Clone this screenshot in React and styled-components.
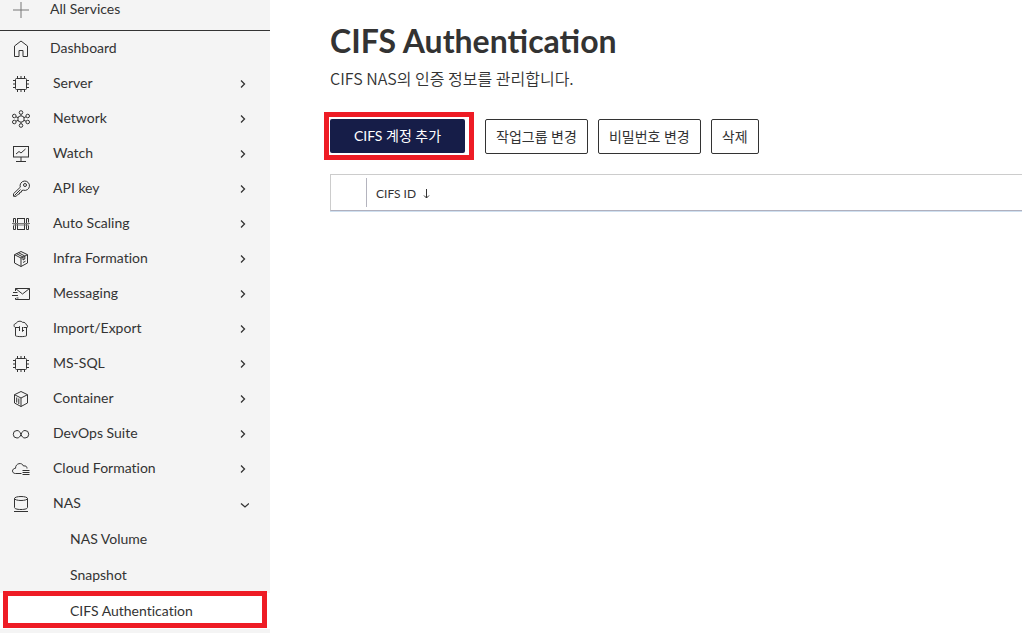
import React from "react";
import styled, { createGlobalStyle, css } from "styled-components";

const GlobalStyle = createGlobalStyle`
  *, *::before, *::after { box-sizing: border-box; }
  body {
    margin: 0;
    background: #fff;
    color: #333;
    font-family: Lato, "Noto Sans CJK KR", sans-serif;
    font-size: 14px;
  }
`;

const Page = styled.div`
  display: flex;
  min-height: 100vh;
`;

const Sidebar = styled.nav`
  flex: 0 0 270px;
  background: #f4f4f4;
  font-variant-ligatures: none;
`;

const List = styled.ul`
  list-style: none;
  margin: 0;
  padding: 0;
`;

const rowStyles = css`
  display: flex;
  align-items: center;
  width: 100%;
  height: 35px;
  padding: 0 21px 2px 11px;
  border: 0;
  background: none;
  color: #333;
  font: inherit;
  line-height: 20px;
  text-align: left;
  text-decoration: none;
  cursor: pointer;
`;

const RowLink = styled.a`
  ${rowStyles}
  gap: 19px;
`;

const AllServices = styled(RowLink)`
  height: 31px;
  padding-bottom: 12px;
  border-bottom: 1px solid #333;
`;

const RowButton = styled.button`
  ${rowStyles}
  gap: 22px;
  font-variant-ligatures: inherit;
`;

const Label = styled.span`
  flex: 1;
`;

const Svg = styled.svg`
  flex: none;
  display: block;
  margin-top: 2px;
  fill: none;
  stroke: #333;
  stroke-width: 1;
`;

const SubLink = styled.a`
  position: relative;
  display: flex;
  align-items: center;
  height: 36px;
  padding-left: 70px;
  background: ${(p) => (p.$active ? "#fff" : "transparent")};
  color: #333;
  line-height: 20px;
  text-decoration: none;
`;

const Highlight = styled.span`
  position: absolute;
  inset: ${(p) => p.$inset};
  border: 5px solid #ee1c25;
  pointer-events: none;
`;

const Main = styled.main`
  flex: 1;
  min-width: 0;
  padding: 19px 0 20px 60px;
`;

const Title = styled.h1`
  margin: 0;
  font-size: 32px;
  line-height: 44px;
  font-weight: 700;
`;

const Description = styled.p`
  margin: 3px 0 0;
  font-size: 16px;
  line-height: 24px;
  font-family: "Noto Sans CJK KR", sans-serif;
  font-weight: 350;
`;

const Toolbar = styled.div`
  display: flex;
  align-items: flex-start;
  gap: 10px;
  margin-top: 29px;
`;

const Button = styled.button`
  height: 35px;
  padding: 0 10px;
  border: 1px solid #333;
  border-radius: 2px;
  background: #fff;
  color: #333;
  font: inherit;
  line-height: 20px;
  white-space: nowrap;
  cursor: pointer;
`;

const PrimaryButton = styled(Button)`
  position: relative;
  width: 135px;
  height: 34px;
  margin-right: 10px;
  border: 0;
  background: #161d48;
  color: #fff;
`;

const Table = styled.table`
  width: 100%;
  margin-top: 20px;
  border: 1px solid #ccc;
  border-right: 0;
  border-bottom-color: #b0b0be;
  border-spacing: 0;
  box-shadow: 0 1px 0 #cfe0f0;
`;

const HeadCell = styled.th`
  height: 35px;
  padding: 0;
  font-size: 12px;
  line-height: 16px;
  font-weight: 400;
  text-align: left;
`;

const CheckCell = styled.td`
  width: 35px;
  padding: 0;
`;

const CellInner = styled.div`
  display: flex;
  align-items: center;
  gap: 7px;
  height: 29px;
  padding: 2px 0 0 9px;
  border-left: 1px solid #b4b4be;
`;

const paths = {
  plus: <path d="M10 2v16M2 10h16" stroke="#777" />,
  home: <path d="M3.500 17.500V7L10 2l6.500 5v10.500h-4.500v-6H8v6z" />,
  chip: (
    <>
      <rect x="4.500" y="4.500" width="11" height="11" rx="1" />
      <path d="M6.500 2v2M10 2v2M13.500 2v2M6.500 16v2M10 16v2M13.500 16v2M2 6.500h2M2 10h2M2 13.500h2M16 6.500h2M16 10h2M16 13.500h2" />
    </>
  ),
  network: (
    <>
      <circle cx="10" cy="10" r="3.200" />
      <circle cx="10" cy="3.500" r="1.800" />
      <circle cx="10" cy="16.500" r="1.800" />
      <circle cx="3.300" cy="7" r="1.800" />
      <circle cx="3.300" cy="13" r="1.800" />
      <circle cx="16.700" cy="7" r="1.800" />
      <circle cx="16.700" cy="13" r="1.800" />
      <path d="M10 5.300v1.500M10 13.200v1.500M5 7.800l2 .8M5 12.200l2-.8M15 7.800l-2 .8M15 12.200l-2-.8" />
    </>
  ),
  watch: (
    <>
      <rect x="2.500" y="2.500" width="15" height="10.500" />
      <path d="M10 13v4M5 17.500h10M5 10l3-2.500 2 1.500 4.500-4" />
    </>
  ),
  key: (
    <>
      <path d="M9.300 8.200a4.700 4.700 0 1 1 3 3l-1.500.3-.4 1.600-1.600.3-.4 1.600-1.500.3-1.700 2H2.500v-2.600z" />
      <path d="M3.500 16.500l6-6" />
      <circle cx="14" cy="6" r="1.500" />
    </>
  ),
  scaling: (
    <>
      <rect x="6.500" y="4.500" width="7" height="11" />
      <path d="M2.500 8.500v-4h2v11h-2v-4M17.500 8.500v-4h-2v11h2v-4" />
      <path d="M1 9.500h18M2 11h16" stroke="#777" />
    </>
  ),
  package: (
    <path d="M10 2.500l6.500 3.200v8.300L10 17.500 3.500 14V5.700zM3.500 5.700L10 9l6.500-3.300M10 9v8.500M5.500 4.700L12 8v3l1.800-1V7L7.500 3.700M12 13.500l2.500-1.300" />
  ),
  mail: (
    <path d="M4.500 7V4.500h14v11h-14V14M4.500 4.500l7 5.500 7-5.500M2 8.500h4.500M1 11.500h6M5.500 14h2" />
  ),
  transfer: (
    <>
      <path d="M4.500 8.500c-2-.5-2-4 .5-4 1-2.500 5-3 6.500-1.200 2.300-.3 3.500 1.200 3.500 2.200 2 .5 2 3 .5 3.500" />
      <path d="M4.500 8v8.800c1.500 1.100 9.500 1.100 11 0V8M4.500 8.500h3M12.500 8.500h3M8.500 12V7.500L7 9M11.500 8v4.500L13 11" />
    </>
  ),
  container: (
    <path d="M10 2.500l6.500 3.200v8.300L10 17.500 3.500 14V5.700zM3.500 5.700L10 9l6.500-3.300M10 9v8.500M5.700 8.500v5M7.800 9.500v5.500" />
  ),
  infinity: (
    <path d="M10 10.500c-1-2.600-2-4-4-4a3.700 3.700 0 0 0 0 7.500c2 0 3-1.200 4-3.500 1-2.600 2-4 4-4a3.700 3.700 0 0 1 0 7.500c-2 0-3-1.200-4-3.500z" />
  ),
  cloud: (
    <>
      <path d="M10.500 14.500H4.500c-4 0-4-5 0-5.200C4.500 4 11 3 12.500 7c2.500-.6 3.500.8 3.500 2.500" />
      <path d="M11.500 11.500h7M11.500 13.500h7M11.500 15.500h7" />
    </>
  ),
  disk: (
    <>
      <ellipse cx="10" cy="4.500" rx="6.500" ry="2" />
      <path d="M3.500 4.500v9c0 1 2 2 6.500 2s6.500-1 6.500-2v-9M3 17.500h14" />
    </>
  ),
};

function Icon({ name }) {
  return (
    <Svg width="20" height="20" viewBox="0 0 20 20" aria-hidden="true">
      {paths[name]}
    </Svg>
  );
}

const Chevron = styled(Svg)`
  stroke-width: 1.3px;
`;

const services = [
  ["Server", "chip"],
  ["Network", "network"],
  ["Watch", "watch"],
  ["API key", "key"],
  ["Auto Scaling", "scaling"],
  ["Infra Formation", "package"],
  ["Messaging", "mail"],
  ["Import/Export", "transfer"],
  ["MS-SQL", "chip"],
  ["Container", "container"],
  ["DevOps Suite", "infinity"],
  ["Cloud Formation", "cloud"],
  ["NAS", "disk", ["NAS Volume", "Snapshot", "CIFS Authentication"]],
];

export default function App() {
  return (
    <>
      <GlobalStyle />
      <Page>
        <Sidebar aria-label="Services">
          <AllServices href="#all">
            <Icon name="plus" />
            <Label>All Services</Label>
          </AllServices>
          <List>
            <li>
              <RowLink href="#dashboard">
                <Icon name="home" />
                <Label>Dashboard</Label>
              </RowLink>
            </li>
            {services.map(([name, icon, children]) => (
              <li key={name}>
                <RowButton type="button" aria-expanded={Boolean(children)}>
                  <Icon name={icon} />
                  <Label>{name}</Label>
                  <Chevron width="10" height="10" viewBox="0 0 10 10" aria-hidden="true">
                    <path d={children ? "M2 4.500L6 8 10 4.500" : "M2 1.500L5.500 5 2 8.500"} />
                  </Chevron>
                </RowButton>
                {children && (
                  <List>
                    {children.map((child) => {
                      const active = child === "CIFS Authentication";
                      return (
                        <li key={child}>
                          <SubLink
                            href="#nas"
                            $active={active}
                            aria-current={active ? "page" : undefined}
                          >
                            {child}
                            {active && <Highlight $inset="-2px 3px 1px" />}
                          </SubLink>
                        </li>
                      );
                    })}
                  </List>
                )}
              </li>
            ))}
          </List>
        </Sidebar>
        <Main>
          <Title>CIFS Authentication</Title>
          <Description>CIFS NAS의 인증 정보를 관리합니다.</Description>
          <Toolbar>
            <PrimaryButton type="button">
              CIFS 계정 추가
              <Highlight $inset="-7px -9px -7px -6px" />
            </PrimaryButton>
            <Button type="button">작업그룹 변경</Button>
            <Button type="button">비밀번호 변경</Button>
            <Button type="button">삭제</Button>
          </Toolbar>
          <Table>
            <thead>
              <tr>
                <CheckCell />
                <HeadCell scope="col" aria-sort="descending">
                  <CellInner>
                    CIFS ID
                    <svg width="8" height="10" viewBox="0 0 8 10" fill="none" stroke="#333" aria-hidden="true">
                      <path d="M3.500 0v9M1 6.500L3.500 9 6 6.500" />
                    </svg>
                  </CellInner>
                </HeadCell>
              </tr>
            </thead>
          </Table>
        </Main>
      </Page>
    </>
  );
}
